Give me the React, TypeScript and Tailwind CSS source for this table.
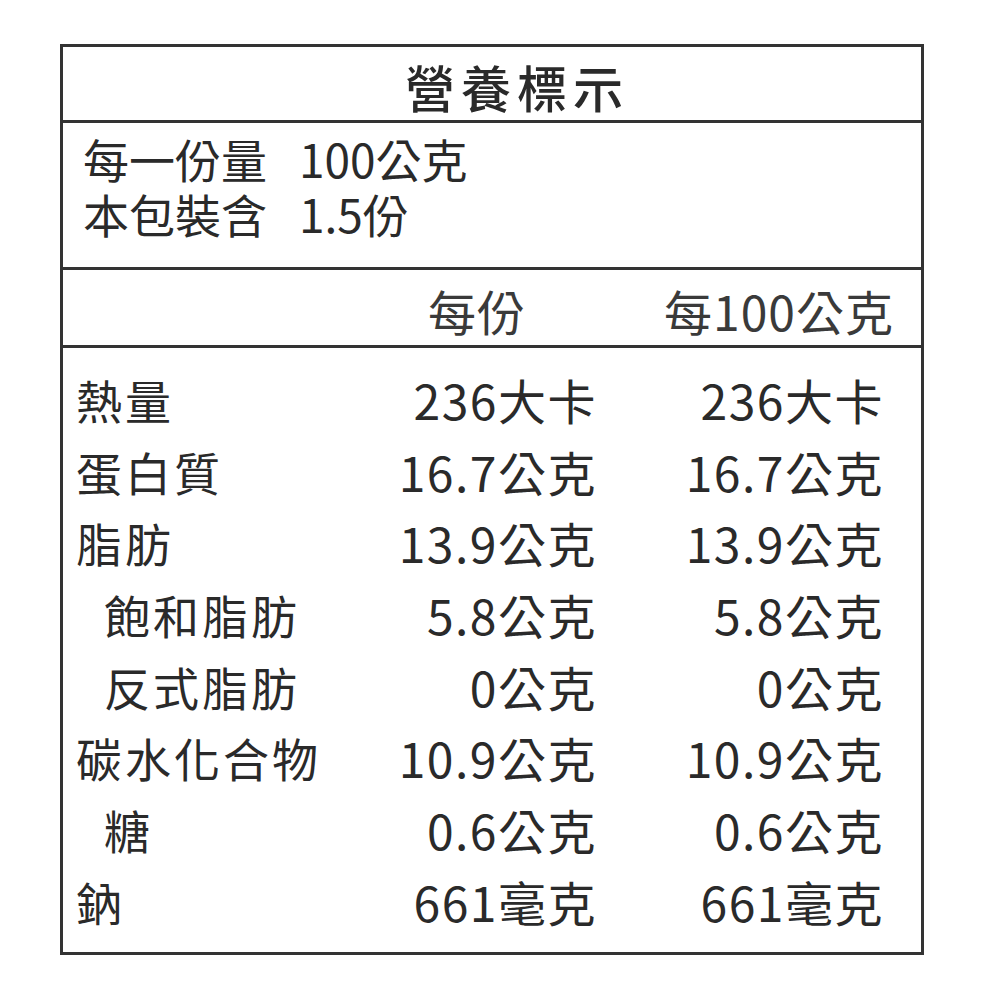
const rows = [
  { name: "熱量", per: "236大卡", per100: "236大卡", sub: false },
  { name: "蛋白質", per: "16.7公克", per100: "16.7公克", sub: false },
  { name: "脂肪", per: "13.9公克", per100: "13.9公克", sub: false },
  { name: "飽和脂肪", per: "5.8公克", per100: "5.8公克", sub: true },
  { name: "反式脂肪", per: "0公克", per100: "0公克", sub: true },
  { name: "碳水化合物", per: "10.9公克", per100: "10.9公克", sub: false },
  { name: "糖", per: "0.6公克", per100: "0.6公克", sub: true },
  { name: "鈉", per: "661毫克", per100: "661毫克", sub: false },
];

export default function App() {
  return (
    <div
      className="w-[1000px] h-[1000px] bg-white pt-[44px] pl-[60px] text-[#2a2a2a]"
      style={{ fontFamily: '"Noto Sans CJK TC", "Noto Sans CJK SC", sans-serif' }}
    >
      <div className="w-[864px] h-[911px] border-[3px] border-[#333] flex flex-col">
        {/* title */}
        <div className="h-[76px] flex items-center justify-center border-b-[3px] border-[#333] pl-[44px]">
          <span className="text-[50px] leading-none font-medium tracking-[6px] pl-[6px] mt-[4px]">營養標示</span>
        </div>

        {/* serving info */}
        <div className="h-[147px] flex flex-col justify-center gap-[9px] border-b-[3px] border-[#333] pl-[20px] pb-[20px]">
          <div className="flex items-center h-[46px]">
            <span className="w-[216px] text-[46px] leading-none">每一份量</span>
            <span className="text-[46px] leading-none">100公克</span>
          </div>
          <div className="flex items-center h-[46px]">
            <span className="w-[216px] text-[46px] leading-none">本包裝含</span>
            <span className="text-[46px] leading-none">1.5份</span>
          </div>
        </div>

        {/* column header */}
        <div className="h-[78px] flex items-center justify-end pr-[27px] border-b-[3px] border-[#333] text-[#3a3a3a]">
          <span className="text-[48px] leading-none tracking-[1px] mt-[4px]">每份</span>
          <span className="w-[368px] text-right text-[48px] leading-none tracking-[1px] mt-[4px]">每100公克</span>
        </div>

        {/* nutrients */}
        <div className="flex-1 flex flex-col pt-[15px]">
          {rows.map((r) => (
            <div key={r.name} className="h-[71.7px] flex items-center pr-[37px]">
              <span
                className={
                  "flex-1 text-[46px] leading-none tracking-[3px] " +
                  (r.sub ? "pl-[41px]" : "pl-[13px]")
                }
              >
                {r.name}
              </span>
              <span className="w-[260px] text-right text-[48px] leading-none tracking-[1.5px]">{r.per}</span>
              <span className="w-[287px] text-right text-[48px] leading-none tracking-[1.5px]">{r.per100}</span>
            </div>
          ))}
        </div>
      </div>
    </div>
  );
}
